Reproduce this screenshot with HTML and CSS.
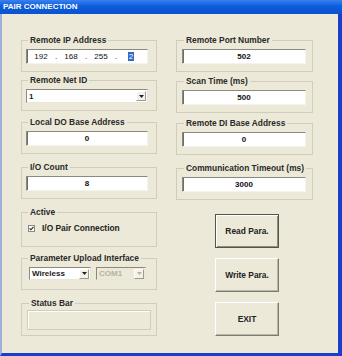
FILE: index.html
```html
<!DOCTYPE html>
<html lang="en">
<head>
  <meta charset="UTF-8">
  <title>PAIR CONNECTION</title>
  <link rel="stylesheet" href="styles.css">
</head>
<body>
<div class="window">
  <div class="titlebar">PAIR CONNECTION</div>
  <div class="dialog">
    <!-- left column -->
    <div class="col left">
      <fieldset class="grp g-ip">
        <legend>Remote IP Address</legend>
        <div class="field ip">
          <span class="oct">192</span><span class="dot">.</span>
          <span class="oct">168</span><span class="dot">.</span>
          <span class="oct">255</span><span class="dot">.</span>
          <span class="oct"><span class="sel">2</span></span>
        </div>
      </fieldset>
      <fieldset class="grp g-net">
        <legend>Remote Net ID</legend>
        <div class="combo wide">
          <span class="val">1</span>
          <span class="drop"><svg width="5" height="3" viewBox="0 0 5 3"><path d="M0 0h5L2.5 3z" fill="#222"/></svg></span>
        </div>
      </fieldset>
      <fieldset class="grp g-mid">
        <legend>Local DO Base Address</legend>
        <div class="field">0</div>
      </fieldset>
      <fieldset class="grp g-mid">
        <legend>I/O Count</legend>
        <div class="field">8</div>
      </fieldset>
      <fieldset class="grp g-active">
        <legend>Active</legend>
        <label class="check">
          <svg class="box" width="7" height="7" viewBox="0 0 7 7"><rect x="0.5" y="0.5" width="6" height="6" fill="#fff" stroke="#8a8a80"/><path d="M1.6 3.4l1.3 1.4 2.6-3" fill="none" stroke="#222" stroke-width="1.1"/></svg>
          I/O Pair Connection
        </label>
      </fieldset>
      <fieldset class="grp g-param">
        <legend>Parameter Upload Interface</legend>
        <div class="combos">
          <div class="combo wireless">
            <span class="val">Wireless</span>
            <span class="drop"><svg width="5" height="3" viewBox="0 0 5 3"><path d="M0 0h5L2.5 3z" fill="#222"/></svg></span>
          </div>
          <div class="combo com off">
            <span class="val">COM1</span>
            <span class="drop"><svg width="5" height="3" viewBox="0 0 5 3"><path d="M0 0h5L2.5 3z" fill="#b5b2a3"/></svg></span>
          </div>
        </div>
      </fieldset>
      <fieldset class="grp g-status">
        <legend>Status Bar</legend>
        <div class="status"></div>
      </fieldset>
    </div>

    <!-- right column -->
    <div class="col right">
      <fieldset class="grp g-port">
        <legend>Remote Port Number</legend>
        <div class="field">502</div>
      </fieldset>
      <fieldset class="grp g-scan">
        <legend>Scan Time (ms)</legend>
        <div class="field">500</div>
      </fieldset>
      <fieldset class="grp g-mid">
        <legend>Remote DI Base Address</legend>
        <div class="field">0</div>
      </fieldset>
      <fieldset class="grp">
        <legend>Communication Timeout (ms)</legend>
        <div class="field">3000</div>
      </fieldset>
      <div class="buttons">
        <button class="btn default">Read Para.</button>
        <button class="btn">Write Para.</button>
        <button class="btn">EXIT</button>
      </div>
    </div>
  </div>
</div>
</body>
</html>
```

FILE: styles.css
```css
*{
  margin: 0;
  padding: 0;
  box-sizing: border-box;
}
body{
  background: #ece9d8;
  font-family: "Liberation Sans", Arial, sans-serif;
  color: #222;
}
.window{
  width: 342px;
  height: 356px;
  display: flex;
  flex-direction: column;
}
/* title bar */
.titlebar{
  height: 14px;
  line-height: 14px;
  padding-left: 3px;
  font-size: 8px;
  font-weight: bold;
  color: #fff;
  background: linear-gradient(#3a80f0, #0b5ddc 45%, #0a52d0);
}
.dialog{
  flex: 1;
  display: flex;
  gap: 19px;
  padding: 21px 0 0 19px;
  background: #ece9d8;
  border-left: 2px solid #9fb1d9;
  border-right: 4px solid #1b3ec8;
  border-bottom: 3px solid #1b3ec8;
}
.col{
  display: flex;
  flex-direction: column;
}
.left{
  width: 136px;
}
.right{
  width: 137px;
}
/* group boxes */
.grp{
  border: 1px solid #d0cdbd;
  padding: 4px 0 7px 4px;
  margin-bottom: 8px;
}
.right .grp{
  padding-left: 5px;
}
.grp legend{
  margin-left: 2px;
  padding: 0 2px;
  font-size: 8.4px;
  line-height: 10px;
  font-weight: bold;
  color: #2a2a2a;
}
.g-ip{
  margin-bottom: 3px;
}
.g-net{
  margin-bottom: 6px;
}
.g-port{
  margin-bottom: 4px;
}
.g-scan{
  margin-bottom: 5px;
}
.g-active{
  padding-bottom: 11px;
  margin-bottom: 6px;
}
.g-param{
  padding-bottom: 9px;
}
.g-status{
  padding: 2px 0 5px 5px;
}
/* text fields */
.field{
  width: 122px;
  height: 15px;
  background: #fff;
  border: 1px solid;
  border-color: #8c8a80 #f4f3ee #f4f3ee #8c8a80;
  box-shadow: inset 1px 0 #6f6d64;
  font-size: 8px;
  font-weight: bold;
  line-height: 13px;
  text-align: center;
  color: #111;
}
.right .field{
  width: 124px;
}
.ip{
  display: flex;
  padding-left: 3px;
  font-weight: normal;
}
.oct{
  width: 22px;
  text-align: center;
}
.dot{
  width: 8px;
  text-align: center;
}
.sel{
  background: #316ac5;
  color: #fff;
  padding: 0 1px;
}
/* combo boxes */
.combo{
  height: 14px;
  display: flex;
  align-items: center;
  justify-content: space-between;
  background: #fff;
  border: 1px solid #8c8a80;
  border-right-color: #e8e6dc;
  border-bottom-color: #e8e6dc;
  font-size: 8px;
  font-weight: bold;
  padding-left: 2px;
}
.combo.wide{
  width: 122px;
}
.drop{
  width: 10px;
  height: 10px;
  margin-right: 1px;
  display: flex;
  align-items: center;
  justify-content: center;
  background: #f2f1ea;
  border: 1px solid;
  border-color: #fff #9d9a8c #9d9a8c #fff;
}
.combos{
  display: flex;
  gap: 5px;
  padding-left: 3px;
}
.combos .combo{
  height: 13px;
}
.wireless{
  width: 62px;
}
.com{
  width: 50px;
}
.combo.off{
  background: #ece9d8;
  color: #b5b2a3;
}
/* checkbox row */
.check{
  height: 14px;
  display: flex;
  align-items: center;
  gap: 7px;
  padding-left: 2px;
  font-size: 8.4px;
  font-weight: bold;
}
/* status bar */
.status{
  width: 124px;
  height: 20px;
  border: 1px solid #d0cdbd;
  box-shadow: inset 1px 1px #fff;
}
/* buttons */
.buttons{
  display: flex;
  flex-direction: column;
  gap: 10px;
  margin: 6px 0 0 39px;
}
.btn{
  width: 64px;
  height: 34px;
  background: #ece9d8;
  border: 1px solid;
  border-color: #fff #7d7b70 #7d7b70 #fff;
  box-shadow: inset -1px -1px #b9b6a6;
  font-family: "Liberation Sans", Arial, sans-serif;
  font-size: 8.4px;
  font-weight: bold;
  color: #222;
}
.btn.default{
  border-color: #55544c;
  box-shadow: inset 1px 1px #fff, inset -1px -1px #8f8d80;
}
```
